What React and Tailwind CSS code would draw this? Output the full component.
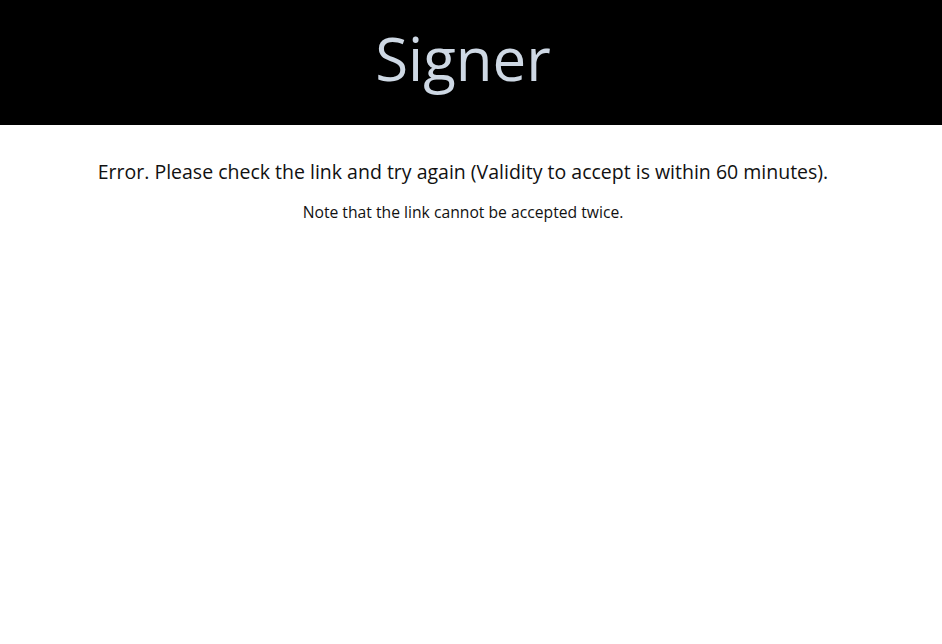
import React from 'react'

export default function App() {
  return (
    <div className="min-h-screen bg-white pr-4" style={{ fontFamily: '"Open Sans", "Noto Sans", sans-serif' }}>
      {/* header */}
      <header className="-mr-4 flex h-[125px] items-center justify-center bg-black pr-4">
        <h1 className="mb-[10px] text-[60px] font-normal leading-none text-[#ced8e4]">Signer</h1>
      </header>

      {/* message */}
      <main className="flex flex-col items-center pt-[34px] text-[#111]">
        <p className="text-[19.5px] leading-[26px]">
          Error. Please check the link and try again (Validity to accept is within 60 minutes).
        </p>
        <p className="mt-[17px] text-[15.7px] leading-[21px]">Note that the link cannot be accepted twice.</p>
      </main>
    </div>
  )
}
